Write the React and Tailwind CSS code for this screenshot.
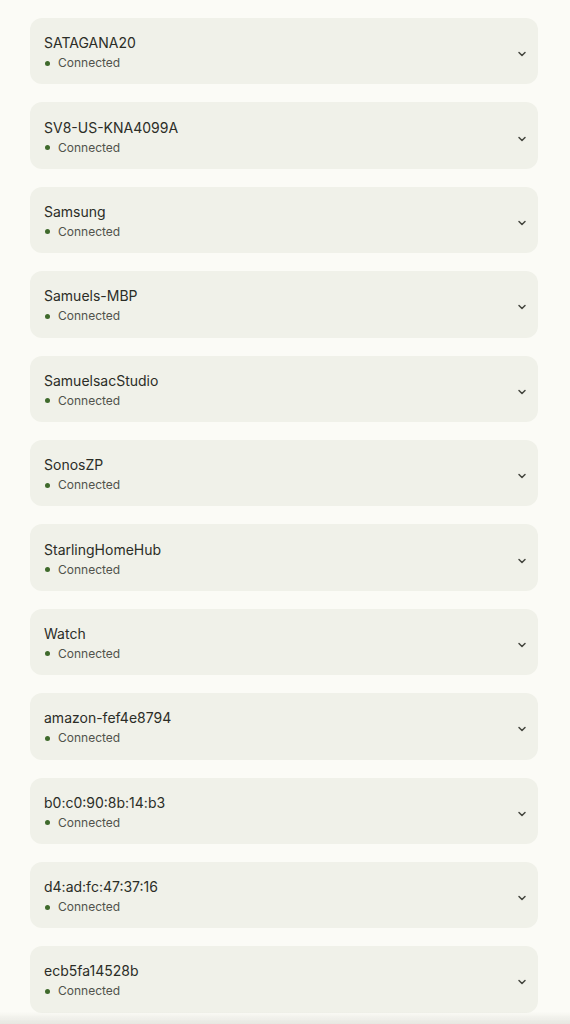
const devices = [
  'SATAGANA20',
  'SV8-US-KNA4099A',
  'Samsung',
  'Samuels-MBP',
  'SamuelsacStudio',
  'SonosZP',
  'StarlingHomeHub',
  'Watch',
  'amazon-fef4e8794',
  'b0:c0:90:8b:14:b3',
  'd4:ad:fc:47:37:16',
  'ecb5fa14528b',
];

const Chevron = () => (
  <svg width="12" height="12" viewBox="0 0 24 24" fill="none" stroke="#45473f" strokeWidth="3" strokeLinecap="round" strokeLinejoin="round">
    <path d="M6 9l6 6 6-6" />
  </svg>
);

const DeviceCard = ({ name }) => (
  <div className="h-[66.4px] rounded-xl bg-[#f0f1e9] flex items-center pl-[14px] pr-[10px]">
    <div className="flex-1 min-w-0 pt-[2px]">
      <div className="text-[14px] leading-5 text-[#2b2d27] truncate">{name}</div>
      <div className="mt-0.5 flex items-center text-[12px] leading-4 text-[#51534c]">
        <span className="ml-[1px] w-[5px] h-[5px] rounded-full bg-[#3f6a2c]" />
        <span className="ml-[8px]">Connected</span>
      </div>
    </div>
    <div className="mt-[6px]">
      <Chevron />
    </div>
  </div>
);

export default function App() {
  return (
    <div className="h-screen bg-[#fbfbf6] overflow-hidden" style={{ fontFamily: 'Inter, "Noto Sans", sans-serif' }}>
      <div className="pl-[30px] pr-[32px] -mt-[66px] flex flex-col gap-[18px]">
        <div className="h-[66px] rounded-xl bg-[#f0f1e9]" />
        {devices.map((d) => (
          <DeviceCard key={d} name={d} />
        ))}
      </div>
      <div className="fixed left-0 right-0 bottom-0 h-[12px] bg-gradient-to-b from-transparent to-[#e6e6e0]" />
    </div>
  );
}
